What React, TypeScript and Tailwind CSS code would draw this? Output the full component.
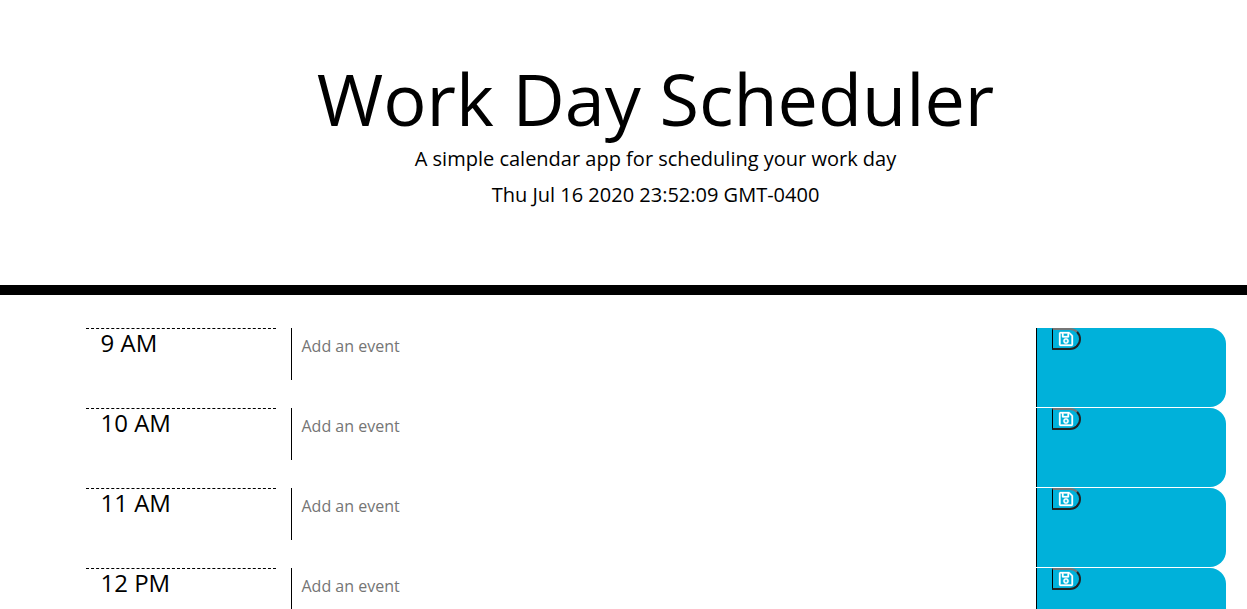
import { FaRegSave } from "react-icons/fa";

const hours = ["9 AM", "10 AM", "11 AM", "12 PM"];

function TimeBlock({ hour }: { hour: string }) {
  const id = `event-${hour.replace(" ", "-")}`;
  return (
    <div className="flex h-20">
      <label htmlFor={id} className="w-1/6 border-t border-dashed border-black px-[15px] text-2xl leading-7">
        {hour}
      </label>
      <div className="flex-1 px-[15px]">
        <textarea
          id={id}
          placeholder="Add an event"
          className="block h-[52px] w-full resize-none border-l border-black px-[10px] py-1.5 text-base leading-6 placeholder:text-[#757575] focus:outline-none"
        />
      </div>
      <div className="w-1/6 border-b border-white">
        <div className="h-full rounded-r-2xl border-l border-black bg-[#00b1da] pl-[15px]">
          <button
            type="button"
            aria-label={`Save ${hour} event`}
            className="flex h-[22px] w-[29px] items-center justify-center rounded-r-xl border-2 border-l border-t-[#767676] border-r-[#222222] border-b-[#222222] border-l-black text-white"
          >
            <FaRegSave className="size-4 stroke-current [stroke-width:10]" />
          </button>
        </div>
      </div>
    </div>
  );
}

export default function App() {
  return (
    <div className="min-h-screen bg-white font-['Open_Sans',sans-serif] text-black">
      <header className="border-b-10 border-black pt-14 pb-[72px] pl-16 text-center">
        <h1 className="text-[72px] leading-[85px]">Work Day Scheduler</h1>
        <p className="text-xl leading-9">A simple calendar app for scheduling your work day</p>
        <p className="text-xl leading-9">Thu Jul 16 2020 23:52:09 GMT-0400</p>
      </header>
      <main className="pt-[33px] pl-16">
        <div className="mx-auto max-w-[1140px]">
          {hours.map((hour) => (
            <TimeBlock key={hour} hour={hour} />
          ))}
        </div>
      </main>
    </div>
  );
}
